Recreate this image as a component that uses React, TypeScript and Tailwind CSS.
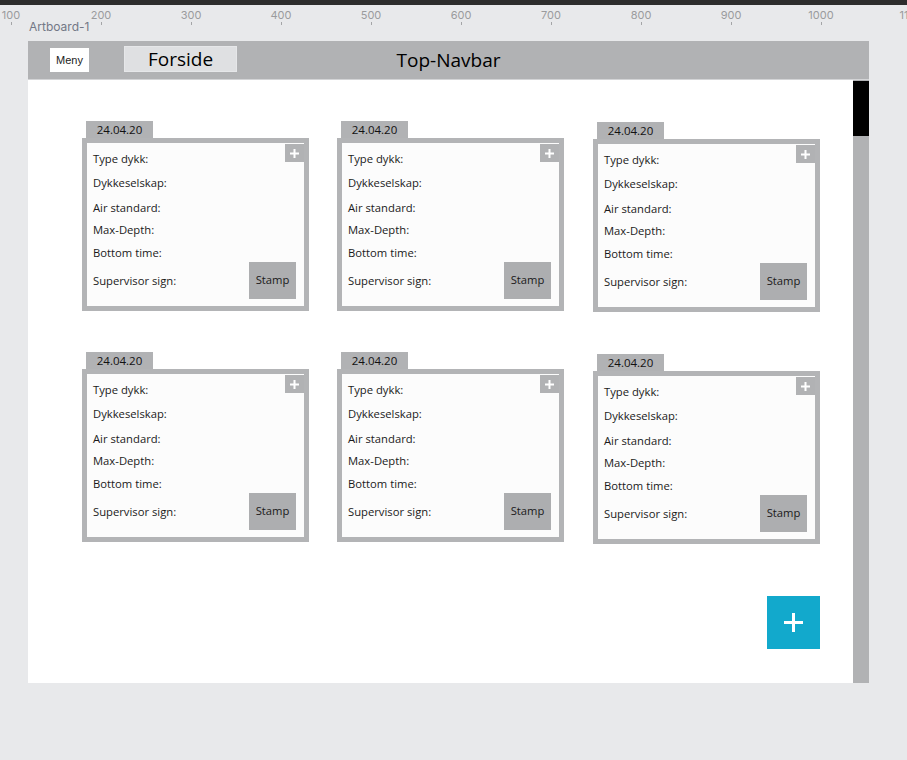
import React from 'react';

type CardProps = {
  dx?: string;
  dy?: string;
};

const fields = ['Type dykk:', 'Dykkeselskap:', 'Air standard:', 'Max-Depth:', 'Bottom time:'];
const gaps = ['mt-[8px]', 'mt-[8px]', 'mt-[9px]', 'mt-[6px]', 'mt-[7px]'];

const rulerMarks = [100, 200, 300, 400, 500, 600, 700, 800, 900, 1000, 1100];

const DiveCard: React.FC<CardProps> = ({ dx = '', dy = '' }) => {
  return (
    <div className={`flex flex-col w-[227px] ${dx} ${dy}`}>
      {/* dato-fane */}
      <div className="ml-[4px] w-[67px] h-[17px] bg-[#b1b2b4] flex items-center justify-center text-[11.5px] leading-[17px] text-[#111]">
        24.04.20
      </div>
      <div className="border-[5px] border-[#b3b4b6] h-[173px]">
        <div className="relative h-full bg-[#fcfcfc] flex flex-col pl-[6px] pr-[8px] text-[11.25px] text-[#1a1a1a]">
          <div className="absolute right-0 top-[1px] w-[19px] h-[18px] bg-[#b1b2b4] flex items-center justify-center">
            <svg width="9" height="9" viewBox="0 0 9 9">
              <rect x="3.5" y="0" width="2" height="9" fill="#fff" />
              <rect x="0" y="3.5" width="9" height="2" fill="#fff" />
            </svg>
          </div>
          {fields.map((f, i) => (
            <div key={f} className={`${gaps[i]} leading-[16px]`}>
              {f}
            </div>
          ))}
          <div className="flex items-center justify-between mt-px">
            <span className="leading-[16px]">Supervisor sign:</span>
            <div className="w-[47px] h-[37px] bg-[#adaeb0] flex items-center justify-center">Stamp</div>
          </div>
        </div>
      </div>
    </div>
  );
};

const App: React.FC = () => {
  return (
    <div className="min-h-screen w-full bg-[#e8e9eb] overflow-hidden" style={{ fontFamily: '"Open Sans", sans-serif' }}>
      <div className="h-[5px] bg-[#2d2d2d]" />

      {/* linjal */}
      <div className="flex -ml-[34px] pt-[4px]" style={{ fontFamily: 'Inter, sans-serif' }}>
        {rulerMarks.map((m) => (
          <div key={m} className="w-[90px] shrink-0 flex flex-col items-center">
            <span className="text-[11px] leading-[13px] text-[#9a9b9d]">{m}</span>
            <span className="w-px h-[3px] bg-[#a4a5a7]" />
          </div>
        ))}
      </div>
      <div
        className="-mt-[5px] ml-[29px] text-[12px] leading-[13px] text-[#737886]"
        style={{ fontFamily: 'Inter, sans-serif' }}
      >
        Artboard-1
      </div>

      {/* artboard */}
      <div className="mt-[8px] ml-[28px] w-[841px] flex flex-col">
        <div className="h-[39px] bg-[#b1b2b4] border-b border-[#d3d4d6] grid grid-cols-[1fr_auto_1fr] items-center">
          <div className="flex items-center">
            <div
              className="ml-[22px] w-[39px] h-[24px] bg-white flex items-center justify-center text-[11px] text-[#222]"
              style={{ fontFamily: '"Liberation Sans", Arial, sans-serif' }}
            >
              Meny
            </div>
            <div className="ml-[35px] -mt-[2px] w-[113px] h-[26px] bg-[#dfe0e2] border border-[#e6e7e9] flex items-center justify-center text-[19px] leading-[26px] text-black">
              Forside
            </div>
          </div>
          <div className="text-[19px] leading-[26px] text-black">Top-Navbar</div>
          <div />
        </div>

        <div className="flex h-[603px]">
          <div className="flex-1 bg-white pl-[54px] pt-[41px] flex flex-col">
            <div className="flex items-start">
              <DiveCard />
              <DiveCard dx="ml-[28px]" />
              <DiveCard dx="ml-[29px]" dy="mt-[1px]" />
            </div>
            <div className="flex items-start mt-[40px]">
              <DiveCard />
              <DiveCard dx="ml-[28px]" />
              <DiveCard dx="ml-[29px]" dy="mt-[2px]" />
            </div>
            <div className="flex justify-end pr-[33px] mt-[52px]">
              <button className="w-[53px] h-[53px] bg-[#12a9cc] flex items-center justify-center">
                <svg width="19" height="19" viewBox="0 0 19 19">
                  <rect x="8" y="0" width="3" height="19" fill="#fff" />
                  <rect x="0" y="8" width="19" height="3" fill="#fff" />
                </svg>
              </button>
            </div>
          </div>
          {/* rullefelt */}
          <div className="w-[16px] bg-[#b1b2b4] pt-px">
            <div className="h-[55px] bg-black" />
          </div>
        </div>
      </div>
    </div>
  );
};

export default App;
